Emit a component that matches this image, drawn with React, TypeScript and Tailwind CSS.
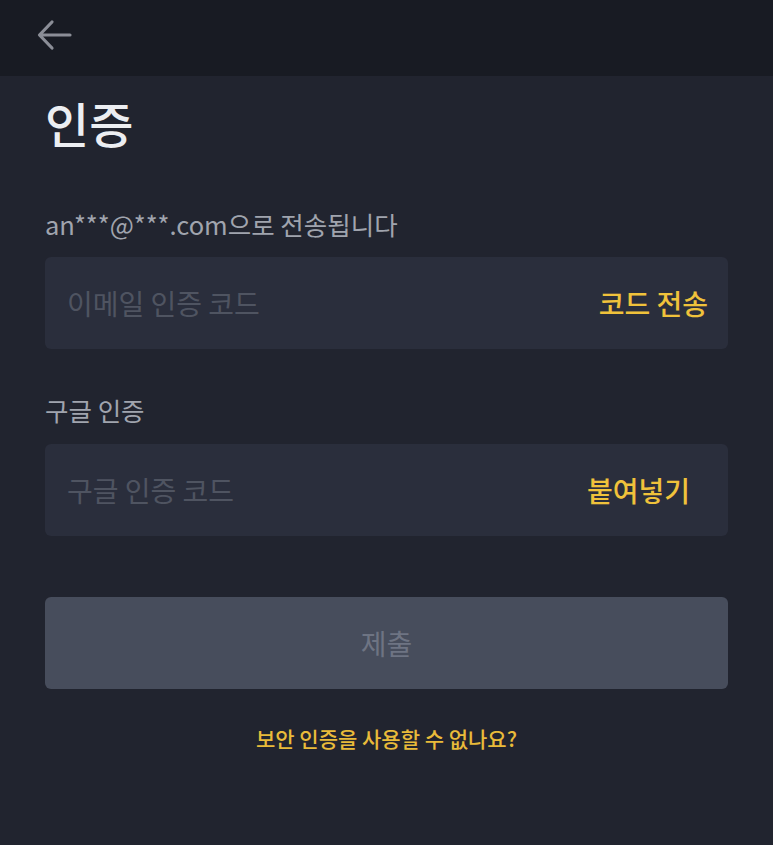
import React from "react";

const font = { fontFamily: '"Noto Sans CJK KR", "Noto Sans", sans-serif' };

const CodeField = ({ placeholder, action, actionPad }: { placeholder: string; action: string; actionPad: string }) => (
  <div className="flex items-center justify-between h-[92px] pl-[22px] rounded-md bg-[#2a2e3c]">
    <input
      type="text"
      placeholder={placeholder}
      className="flex-1 min-w-0 bg-transparent text-[28px] text-[#e6e8ea] placeholder:text-[#4f5461] outline-none"
    />
    <button className={`text-[28px] font-medium text-[#f0c23b] ${actionPad}`}>{action}</button>
  </div>
);

export default function App() {
  return (
    <div className="w-[773px] h-[845px] flex flex-col bg-[#21242f]" style={font}>
      <header className="h-[76px] shrink-0 flex items-start pt-[19px] px-[36px] bg-[#181b23]">
        <svg width="38" height="32" viewBox="0 0 38 32" fill="none" stroke="#8b8e97" strokeWidth="3.2" strokeLinecap="round" strokeLinejoin="round">
          <path d="M34 16H4M16 3 3.5 16 16 29" />
        </svg>
      </header>

      <main className="flex flex-col px-[45px]">
        <h1 className="mt-[14px] text-[48px] font-medium text-[#eceef2] leading-[64px]">인증</h1>

        <p className="mt-[53px] text-[25.5px] text-[#a0a4ae] leading-[34px]">an***@***.com으로 전송됩니다</p>
        <div className="mt-[16px]">
          <CodeField placeholder="이메일 인증 코드" action="코드 전송" actionPad="pr-[20px]" />
        </div>

        <p className="mt-[44px] text-[25.5px] text-[#a0a4ae] leading-[34px]">구글 인증</p>
        <div className="mt-[17px]">
          <CodeField placeholder="구글 인증 코드" action="붙여넣기" actionPad="pr-[38px]" />
        </div>

        <button className="mt-[61px] h-[92px] rounded-md bg-[#474d5c] text-[28px] text-[#6e7483]">제출</button>

        <a href="#" className="mt-[34px] self-center text-[21px] font-medium text-[#e9bb3a]">
          보안 인증을 사용할 수 없나요?
        </a>
      </main>
    </div>
  );
}
